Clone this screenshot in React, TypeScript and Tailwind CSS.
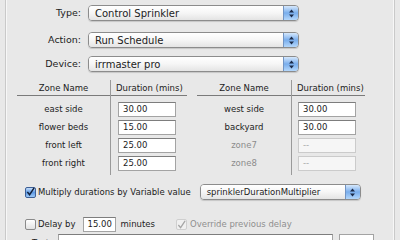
import React from "react";

const Arrows = () => (
  <svg width="5" height="9" viewBox="0 0 5 9">
    <path d="M2.5 0.5 L5 3.5 L0 3.5 Z" fill="#1b2a48" />
    <path d="M2.5 8.5 L5 5.5 L0 5.5 Z" fill="#1b2a48" />
  </svg>
);

const Popup = ({ text, width, size = "text-[10px]" }: { text: string; width: string; size?: string }) => (
  <div className={`flex h-[16px] ${width} rounded-[4px] border border-[#8c8c8c] overflow-hidden shadow-[0_1px_1px_rgba(0,0,0,0.15)]`}>
    <div className={`flex-1 flex items-center pl-[6px] ${size} text-[#1c1c1c] bg-gradient-to-b from-white via-[#f6f6f6] to-[#e4e4e4]`}>
      {text}
    </div>
    <div className="w-[15px] flex items-center justify-center border-l border-[#7194c4] bg-gradient-to-b from-[#d6e8fc] via-[#78adec] to-[#b4d7fb]">
      <Arrows />
    </div>
  </div>
);

const Field = ({ value, width, disabled }: { value: string; width: string; disabled?: boolean }) => (
  <div
    className={`h-[15px] ${width} flex items-center pl-[4px] text-[8.5px] border ${
      disabled
        ? "bg-[#f6f6f6] border-[#cbcbcb] text-[#a8a8a8]"
        : "bg-white border-[#a3a3a3] border-t-[#7d7d7d] text-[#1c1c1c]"
    }`}
  >
    {value}
  </div>
);

const Check = ({ checked, disabled }: { checked?: boolean; disabled?: boolean }) => {
  if (disabled) {
    return (
      <div className="w-[11px] h-[11px] rounded-[2px] border border-[#cfcfcf] bg-[#f0f0f0] flex items-center justify-center">
        <svg width="10" height="10" viewBox="0 0 10 10">
          <path d="M1.5 5 L4 8 L9 0.5" stroke="#a5a5a5" strokeWidth="1.4" fill="none" />
        </svg>
      </div>
    );
  }
  if (checked) {
    return (
      <div className="w-[11px] h-[11px] rounded-[2px] border border-[#3d5f95] bg-gradient-to-b from-[#c5defb] via-[#5e9ae4] to-[#9cc8f7] flex items-center justify-center">
        <svg width="10" height="10" viewBox="0 0 10 10">
          <path d="M1.5 5 L4 8 L9 0.5" stroke="#12203a" strokeWidth="1.6" fill="none" />
        </svg>
      </div>
    );
  }
  return (
    <div className="w-[11px] h-[11px] rounded-[2px] border border-[#8a8a8a] bg-gradient-to-b from-white to-[#e2e2e2]" />
  );
};

type Zone = { name: string; value: string; disabled?: boolean };

const ZoneTable = ({ zones, nameW, durW, durPad }: { zones: Zone[]; nameW: string; durW: string; durPad: string }) => (
  <div className="flex text-[8.5px] text-[#1c1c1c]">
    <div className={`${nameW} flex flex-col`}>
      <div className="h-[16px] border-b border-[#7a7a7a] flex items-center justify-center pt-[2px]">Zone Name</div>
      <div className="pt-[4px] pb-[3px] flex flex-col">
        {zones.map((z) => (
          <div key={z.name} className={`h-[18px] flex items-center justify-center ${z.disabled ? "text-[#8c8c8c]" : ""}`}>
            {z.name}
          </div>
        ))}
      </div>
    </div>
    <div className={`${durW} flex flex-col border-l border-[#9a9a9a]`}>
      <div className="h-[16px] border-b border-[#7a7a7a] flex items-center pl-[5px] pt-[2px]">Duration (mins)</div>
      <div className={`pt-[4px] pb-[3px] flex flex-col ${durPad}`}>
        {zones.map((z) => (
          <div key={z.name} className="h-[18px] flex items-center">
            <Field value={z.value} width="w-[58px]" disabled={z.disabled} />
          </div>
        ))}
      </div>
    </div>
  </div>
);

const leftZones: Zone[] = [
  { name: "east side", value: "30.00" },
  { name: "flower beds", value: "15.00" },
  { name: "front left", value: "25.00" },
  { name: "front right", value: "25.00" },
];

const rightZones: Zone[] = [
  { name: "west side", value: "30.00" },
  { name: "backyard", value: "30.00" },
  { name: "zone7", value: "--", disabled: true },
  { name: "zone8", value: "--", disabled: true },
];

export default function App() {
  return (
    <div className="w-[400px] h-[240px] overflow-hidden bg-[#e8e8e8] font-['DejaVu_Sans',sans-serif] text-[#1c1c1c]">
      <div className="ml-[5px] mr-[5px] h-full border-l border-r border-[#c9c9c9] shadow-[inset_1px_0_0_#f7f7f7,inset_-1px_0_0_#f7f7f7] flex flex-col">
        {/* popups */}
        <div className="flex items-center mt-[5px]">
          <div className="w-[75px] text-right text-[9.5px]">Type:</div>
          <div className="ml-[7px]">
            <Popup text="Control Sprinkler" width="w-[211px]" />
          </div>
        </div>
        <div className="flex items-center mt-[11px]">
          <div className="w-[75px] text-right text-[9.5px]">Action:</div>
          <div className="ml-[7px]">
            <Popup text="Run Schedule" width="w-[211px]" />
          </div>
        </div>
        <div className="flex items-center mt-[8px]">
          <div className="w-[75px] text-right text-[9.5px]">Device:</div>
          <div className="ml-[7px]">
            <Popup text="irrmaster pro" width="w-[211px]" />
          </div>
        </div>

        {/* zone tables */}
        <div className="flex mt-[8px] ml-[11px] gap-[10px]">
          <ZoneTable zones={leftZones} nameW="w-[93px]" durW="w-[77px]" durPad="pl-[7px]" />
          <ZoneTable zones={rightZones} nameW="w-[94px]" durW="w-[74px]" durPad="pl-[6px]" />
        </div>

        {/* multiply */}
        <div className="flex items-center h-[16px] mt-[9px] pl-[19px] text-[8.5px]">
          <Check checked />
          <span className="ml-[2px]">Multiply durations by Variable value</span>
          <div className="ml-[9px]">
            <Popup text="sprinklerDurationMultiplier" width="w-[161px]" size="text-[8.5px]" />
          </div>
        </div>

        {/* delay */}
        <div className="flex items-center h-[16px] mt-[17px] pl-[19px] text-[8.5px]">
          <Check />
          <span className="ml-[2px]">Delay by</span>
          <div className="ml-[7px]">
            <Field value="15.00" width="w-[33px]" />
          </div>
          <span className="ml-[5px]">minutes</span>
          <div className="ml-[21px]">
            <Check disabled />
          </div>
          <span className="ml-[3px] text-[#8f8f8f]">Override previous delay</span>
        </div>

        {/* bottom, clipped */}
        <div className="flex items-start mt-[2px] text-[8.5px]">
          <div className="w-[46px] text-right pt-[3px] text-[#1c1c1c]">Text:</div>
          <div className="ml-[6px] w-[275px] h-[16px] bg-white border border-[#a3a3a3] border-t-[#7d7d7d]" />
          <div className="ml-[6px] w-[35px] h-[16px] bg-white border border-[#a3a3a3]" />
        </div>
      </div>
    </div>
  );
}
